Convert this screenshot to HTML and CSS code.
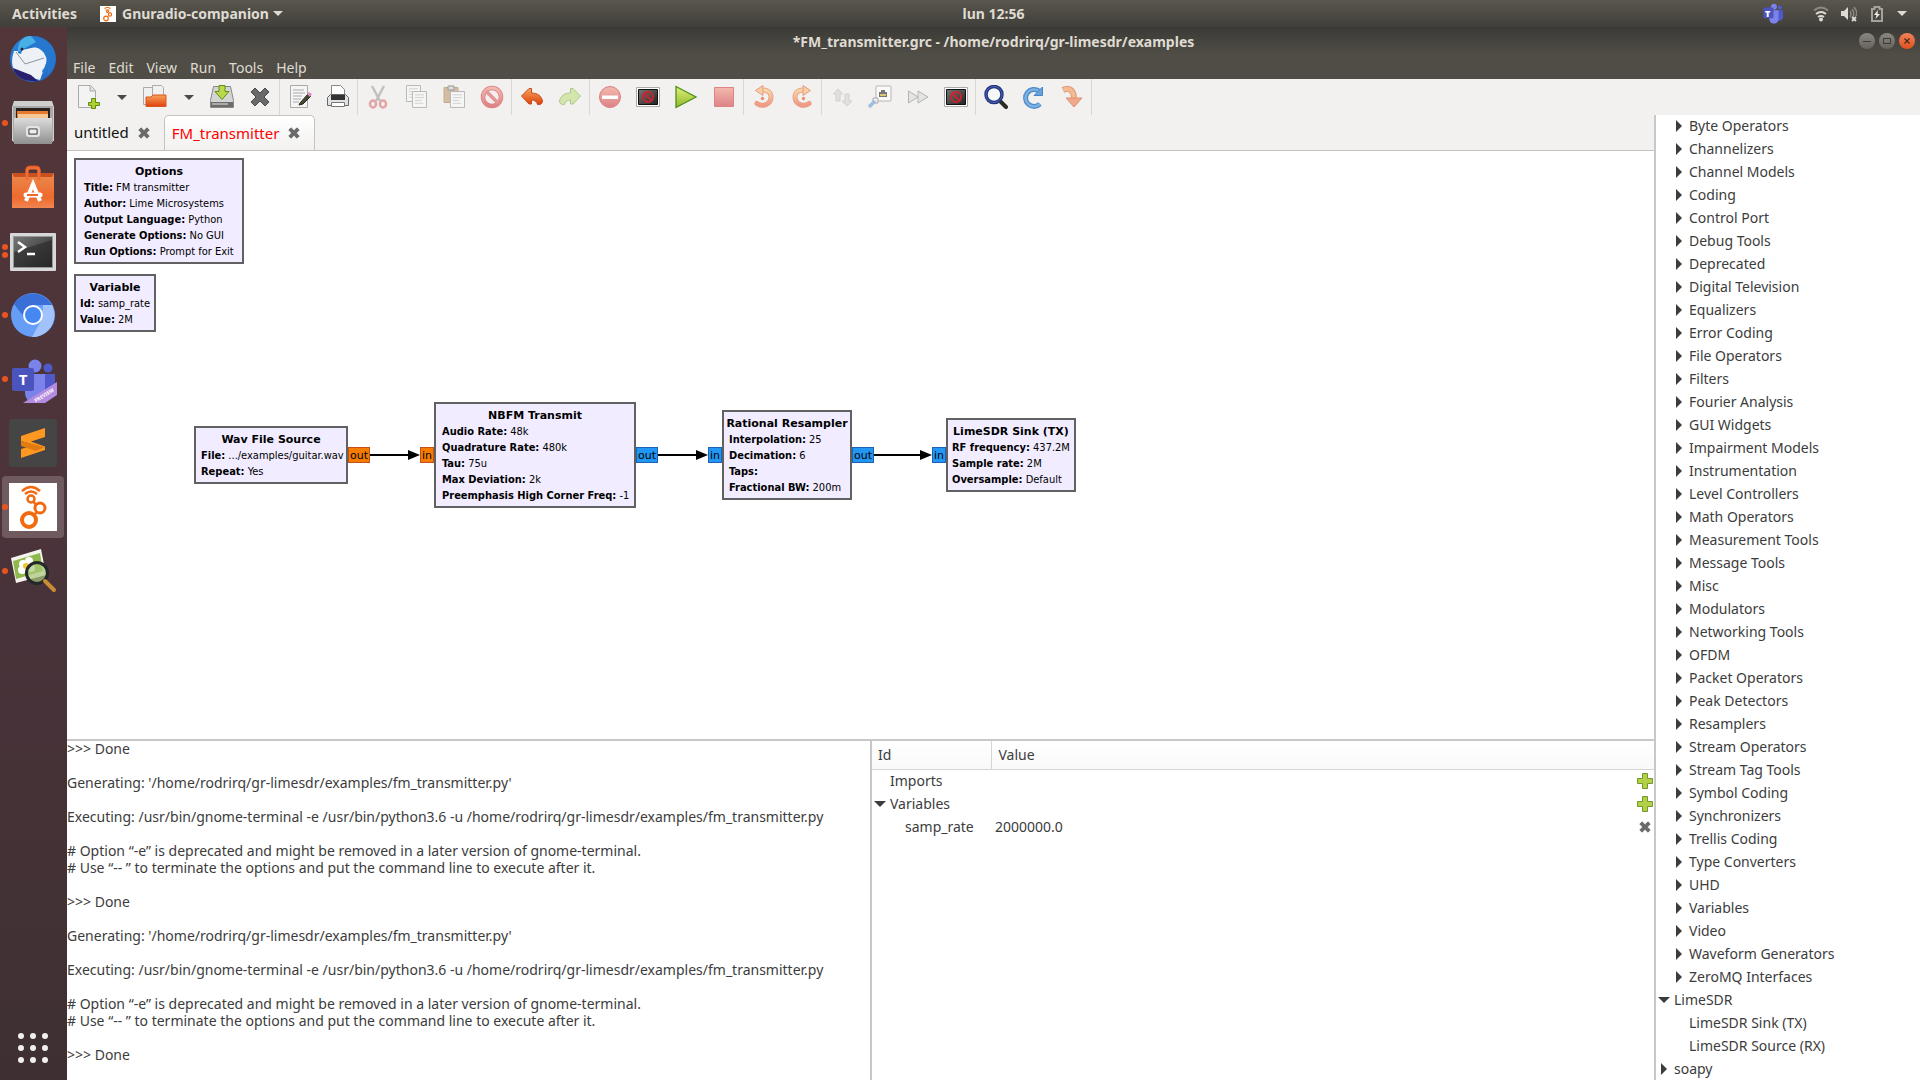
FILE: index.html
```html
<!DOCTYPE html>
<html lang="en">
<head>
<meta charset="utf-8">
<title>*FM_transmitter.grc - /home/rodrirq/gr-limesdr/examples</title>
<link rel="stylesheet" href="styles.css">
</head>
<body>
<svg class="defs" width="0" height="0" aria-hidden="true">
  <defs>
    <linearGradient id="g-steel" x1="0" y1="0" x2="0" y2="1"><stop offset="0" stop-color="#dcdcdc"/><stop offset="1" stop-color="#8f8f8f"/></linearGradient>
    <linearGradient id="g-red" x1="0" y1="0" x2="0" y2="1"><stop offset="0" stop-color="#f3b9ad"/><stop offset="1" stop-color="#de8287"/></linearGradient>
    <linearGradient id="g-green" x1="0" y1="0" x2="0" y2="1"><stop offset="0" stop-color="#dff07a"/><stop offset="1" stop-color="#8fb82a"/></linearGradient>
    <linearGradient id="g-orange" x1="0" y1="0" x2="0" y2="1"><stop offset="0" stop-color="#f7a35c"/><stop offset="1" stop-color="#e0400f"/></linearGradient>
    <linearGradient id="g-peach" x1="0" y1="0" x2="0" y2="1"><stop offset="0" stop-color="#f8d6a6"/><stop offset="1" stop-color="#f09a84"/></linearGradient>
    <linearGradient id="g-dark" x1="0" y1="0" x2="1" y2="1"><stop offset="0" stop-color="#777"/><stop offset="1" stop-color="#222"/></linearGradient>
    <linearGradient id="g-bag" x1="0" y1="0" x2="0" y2="1"><stop offset="0" stop-color="#e98a4e"/><stop offset=".7" stop-color="#ef6a2d"/><stop offset="1" stop-color="#f28552"/></linearGradient>
    <linearGradient id="g-bird" x1="0" y1="0" x2="1" y2="1"><stop offset="0" stop-color="#2f8fe0"/><stop offset=".5" stop-color="#1f5fc4"/><stop offset="1" stop-color="#2c74c8"/></linearGradient>
  </defs>
  <symbol id="i-cross" viewBox="0 0 24 24"><path d="M3 7l4-4 5 5 5-5 4 4-5 5 5 5-4 4-5-5-5 5-4-4 5-5z" fill="#6a6a6a" stroke="#4a4a4a" stroke-linejoin="round"/></symbol>
  <symbol id="i-plus" viewBox="0 0 16 16"><path d="M5.500.5h5v5h5v5h-5v5h-5v-5h-5v-5h5z" fill="#b5d047" stroke="#6f9a2a"/></symbol>
  <symbol id="i-page" viewBox="0 0 16 18"><path d="M.5.5h15v17H.500z" fill="#f6f6f6" stroke="#b4b4b2"/><path d="M3 4h10M3 7h10M3 10h7M3 13h9" stroke="#cfcfcd"/></symbol>
  <symbol id="i-screen" viewBox="0 0 24 24"><path d="M.5 2.500h23v19H.500z" fill="#fff" stroke="#aaa"/><path d="M2.500 4.500h19v15h-19z" fill="url(#g-dark)" stroke="#111"/><circle cx="12" cy="12" r="5" fill="none" stroke="#c8242f" stroke-width="2"/><path d="M8.500 8.500l7 7" stroke="#c8242f" stroke-width="2"/></symbol>
  <symbol id="i-rotate" viewBox="0 0 24 24"><path d="M5 18.500c5 3.500 14 1.500 14-6.500 0-5-4-7-8-7" fill="none" stroke="#e59b82" stroke-width="5" stroke-linecap="round"/><path d="M5 18.500c5 3.500 14 1.500 14-6.500 0-5-4-7-8-7" fill="none" stroke="url(#g-peach)" stroke-width="3.500" stroke-linecap="round"/><path d="M11 0.500v10L3.500 5.500z" fill="#f8cfa4" stroke="#e59b82"/><circle cx="10.500" cy="13.500" r="1.700" fill="#e88f70"/></symbol>
  <symbol id="i-undo" viewBox="0 0 24 24"><path d="M1.500 11L9 3.500h2.500v4.500c6 0 10 3 11 8 0 3-2.500 4-5 3.500-.5-3-3-4.500-6-4.500v4H9z" stroke-linejoin="round"/></symbol>
  <symbol id="i-teams" viewBox="0 0 48 48"><circle cx="26" cy="8" r="6.500" fill="#7b83eb"/><circle cx="39" cy="10" r="4.500" fill="#5059c9"/><path d="M31 16h15v14c0 6-4 9-9 9h-6z" fill="#5059c9"/><path d="M16 16h20v18c0 8-5 11-10 11s-10-3-10-11z" fill="#7b83eb"/><rect x="3" y="10" width="22" height="23" rx="2" fill="#4b53bc"/></symbol>
  <symbol id="i-down" viewBox="0 0 12 6"><path d="M0 0h12L6 6z" fill="currentColor"/></symbol>
  <symbol id="i-right" viewBox="0 0 6 12"><path d="M0 0v12l6-6z" fill="currentColor"/></symbol>
</svg>

<header class="panel">
  <nav class="panel-left">
    <button class="panel-btn">Activities</button>
    <button class="panel-btn app-menu">
      <svg class="app-icon" viewBox="0 0 16 16"><path d="M0 0h16v16H0z" fill="#fff"/><g fill="none" stroke="#f26a10" stroke-width="1.200"><path d="M4.500 2.500q3-2 6 0M5.500 4h4"/><circle cx="7.500" cy="5.500" r="1"/><circle cx="10" cy="8.500" r="1.600"/><circle cx="6" cy="12.500" r="2.300"/></g></svg>
      <span>Gnuradio-companion</span>
      <svg class="caret"><use href="#i-down"/></svg>
    </button>
  </nav>
  <time class="clock">lun 12:56</time>
  <div class="tray">
    <span class="tray-teams"><svg viewBox="0 0 48 48" width="24" height="22"><use href="#i-teams"/></svg><b>T</b></span>
    <svg width="16" height="16" viewBox="0 0 16 16" fill="none" stroke="#dfdbd2" stroke-width="2"><path d="M1 4.500q7-6 14 0" stroke="#8b887f"/><path d="M3 8q5-4 10 0"/><path d="M5 11q3-2 6 0"/><circle cx="8" cy="13.500" r="1" fill="#dfdbd2"/></svg>
    <svg width="16" height="16" viewBox="0 0 16 16"><path d="M0 5h3l4-4v13l-4-4H0z" fill="#dfdbd2"/><path d="M9 5q2 3 0 6M11 3q3 4 1 8M13 1q4 5 2 9" fill="none" stroke="#8b887f" stroke-width="1.500"/><path d="M11 11l4 4m0-4l-4 4" stroke="#dfdbd2" stroke-width="1.800"/></svg>
    <svg width="16" height="16" viewBox="-2 0 16 16"><path d="M1 3h2.500V1h5v2H11v12H1z" fill="none" stroke="#a5a29a" stroke-width="2"/><path d="M7 4L3 9h2.500L4.500 13 9 8H6.500z" fill="#efece5"/></svg>
    <svg class="caret"><use href="#i-down"/></svg>
  </div>
</header>

<div class="desktop">
  <nav class="dock">
    <button class="dock-item" aria-label="Mail"><svg viewBox="0 0 48 48"><circle cx="24" cy="24" r="23" fill="url(#g-bird)"/><path d="M5 16q-6 18 6 24l20 5 8-22-8-12-22 5z" fill="#eef2f6"/><path d="M7 17l9 12 19-6" fill="none" stroke="#8c96a2"/><path d="M4 33q2 8 12 12l14 2-8-7z" fill="#2a1f6e"/><path d="M9 18C7 6 14 1 21 1c11-1 23 6 25 17 2 10-2 18-8 23l1-7-4 6-2-4q8-9 2-18-5-7-14-6-8 0-9 7z" fill="#2577cf"/><path d="M9 17C8 7 14 1 22 1l5 6-9 5z" fill="#49b0e6"/><circle cx="13" cy="14" r="1.500" fill="#223"/></svg></button>
    <button class="dock-item running" aria-label="Files"><svg viewBox="0 0 48 48"><path d="M5 2h38l2 6v34H3V8z" fill="#cfcfcf"/><path d="M4 7h40v36H4z" fill="#a9a9a9"/><path d="M7 9h34v10H7z" fill="#2b2220"/><path d="M8 12h31v8H8z" fill="#e67a2e"/><path d="M9 15h30v5H9z" fill="#f6c795"/><path d="M5 19h38v26H5z" fill="url(#g-steel)"/><rect x="18" y="28" width="12" height="9" rx="2" fill="none" stroke="#e4e4e4" stroke-width="2"/><path d="M20 30h8v5h-8z" fill="#eee" stroke="#555"/></svg></button>
    <button class="dock-item" aria-label="Software"><svg viewBox="0 0 48 48"><path d="M18 14V7q0-3 3-3h6q3 0 3 3v7" fill="none" stroke="#d9501e" stroke-width="3"/><path d="M3 10h42v35H3z" fill="url(#g-bag)"/><path d="M3 10h42l-2 4H5z" fill="#c9501f"/><path d="M18 17V8q0-3 3-3h6q3 0 3 3v9" fill="none" stroke="#ef6c35" stroke-width="3"/><path d="M17 38l7-17 7 17" fill="none" stroke="#fff" stroke-width="4"/><path d="M17 32h14" stroke="#fff" stroke-width="5" stroke-linecap="round"/><path d="M18 32h11" stroke="#ef6a2d" stroke-width="2"/></svg></button>
    <button class="dock-item running twice" aria-label="Terminal"><svg viewBox="0 -1 48 48"><rect x="1" y="5" width="46" height="38" rx="1" fill="#d8d8d8"/><path d="M4 8h40v32H4z" fill="#999"/><path d="M5 9h38v30H5z" fill="url(#g-dark)"/><path d="M5 24L43 12v27H5z" fill="#2a2a2a" opacity=".6"/><path d="M9 14l7 5-7 5M18 26h8" fill="none" stroke="#fff" stroke-width="2.500"/></svg></button>
    <button class="dock-item running" aria-label="Chromium"><svg viewBox="0 0 48 48"><circle cx="24" cy="24" r="22" fill="#669df6"/><path d="M5 13A22 22 0 0 1 43 14H24l-9 12z" fill="#3b6fd8"/><path d="M43 14A22 22 0 0 1 23 46l10-18 1-14z" fill="#a1c2fa"/><circle cx="24" cy="24" r="10" fill="#fff"/><circle cx="24" cy="24" r="8" fill="#4688f1"/></svg></button>
    <button class="dock-item running" aria-label="Teams"><svg viewBox="0 0 48 48"><use href="#i-teams" y="3" width="48" height="48"/><path d="M14 48L48 27v13L36 48z" fill="#b48be0"/><text class="teams-t" x="14" y="30">T</text><text class="teams-preview" x="35" y="42" transform="rotate(-32 35 40)">PREVIEW</text></svg></button>
    <button class="dock-item" aria-label="Sublime Text"><svg viewBox="0 0 48 48"><rect width="48" height="48" rx="3" fill="#454545"/><path d="M12 17l24-8v9l-14 4.500 14 5V31l-24 8v-9l13-4-13-4z" fill="#ff9821"/><path d="M12 22l24 6-9 4-15-5z" fill="#e07c10"/></svg></button>
    <button class="dock-item running active" aria-label="GNU Radio Companion"><svg viewBox="0 0 48 48"><path d="M0 0h48v48H0z" fill="#fff"/><g fill="none" stroke="#f26a10" stroke-width="2.500"><path d="M13 8q9-8 18 0M16 11q6-5 12 0"/><circle cx="22" cy="16" r="3.500"/><circle cx="31" cy="25" r="5" stroke-width="3"/><circle cx="20" cy="37" r="7" stroke-width="4"/><path d="M24 18l3 4M28 29l-3 3"/></g></svg></button>
    <button class="dock-item running" aria-label="Image Viewer"><svg viewBox="0 0 48 48"><path d="M2 11l30-9 5 26-30 8z" fill="#f4f4ee"/><path d="M4 14l27-8 3 18-27 8z" fill="#8fb94c"/><g fill="#fff"><circle cx="14" cy="17" r="4"/><circle cx="20" cy="14" r="4"/><circle cx="13" cy="23" r="4"/><circle cx="22" cy="21" r="4"/></g><circle cx="17" cy="19" r="3" fill="#f1c62c"/><circle cx="28" cy="26" r="10.500" fill="#a9c77a" fill-opacity=".7" stroke="#23282a" stroke-width="3"/><path d="M36 34l9 9" stroke="#c98b33" stroke-width="4" stroke-linecap="round"/></svg></button>
    <button class="dock-item show-apps" aria-label="Show Applications"><svg viewBox="0 0 48 48" fill="#f2f0ee"><circle cx="12" cy="12" r="3"/><circle cx="24" cy="12" r="3"/><circle cx="36" cy="12" r="3"/><circle cx="12" cy="24" r="3"/><circle cx="24" cy="24" r="3"/><circle cx="36" cy="24" r="3"/><circle cx="12" cy="36" r="3"/><circle cx="24" cy="36" r="3"/><circle cx="36" cy="36" r="3"/></svg></button>
  </nav>

  <main class="window">
    <header class="titlebar">
      <h1 class="title">*FM_transmitter.grc - /home/rodrirq/gr-limesdr/examples</h1>
      <div class="win-buttons">
        <button aria-label="Minimize"><svg viewBox="0 0 16 16"><path d="M4 8.500h8" stroke="#3c3b37"/></svg></button>
        <button aria-label="Maximize"><svg viewBox="0 0 16 16"><path d="M4.500 5.500h7v5h-7z" fill="none" stroke="#3c3b37"/></svg></button>
        <button class="close" aria-label="Close"><svg viewBox="0 0 16 16"><path d="M5.500 5.500l5 5m0-5l-5 5" stroke="#4a2a1c" stroke-width="1.300"/></svg></button>
      </div>
    </header>
    <nav class="menubar">
      <button>File</button><button>Edit</button><button>View</button><button>Run</button><button>Tools</button><button>Help</button>
    </nav>
    <div class="toolbar" role="toolbar">
      <div class="group">
        <button aria-label="New"><svg viewBox="0 0 24 24"><path d="M2.500.5h12l5 5v17h-17z" fill="#f3f3f3" stroke="#aaa"/><path d="M14 1v5h5" fill="#ddd" stroke="#aaa"/><path d="M15.500 13.500h4v4h4v3h-4v3h-4v-3h-3v-3h3z" fill="#b0d030" stroke="#5f8a10"/></svg></button>
        <button class="drop" aria-label="New menu"><svg><use href="#i-down"/></svg></button>
        <button aria-label="Open"><svg viewBox="0 0 24 24"><path d="M.5 2.500h9v17h-9zM9.500.5h9l2 2v12h-11z" fill="#f0f0f0" stroke="#aaa"/><path d="M3 21.500V12h5l2-2h13v11.500z" fill="url(#g-orange)" stroke="#d9541e"/></svg></button>
        <button class="drop" aria-label="Open menu"><svg><use href="#i-down"/></svg></button>
        <button aria-label="Save"><svg viewBox="0 0 24 24"><path d="M3.500 1.500h17l3 14v7H.500v-7z" fill="#d4d4d4" stroke="#888"/><path d="M1 17h22v5H1z" fill="#6c6c6c"/><path d="M2 18h16v2H2z" fill="#aaa"/><path d="M9 .5h6v6h4l-7 8-7-8h4z" fill="#b8d94a" stroke="#5f8f14"/></svg></button>
        <button aria-label="Close"><svg viewBox="0 0 24 24"><use href="#i-cross"/></svg></button>
      </div>
      <div class="group">
        <button aria-label="Screen capture"><svg viewBox="0 0 24 24"><path d="M2.500.5h17v22h-17z" fill="#f5f5f5" stroke="#aaa"/><path d="M5 5h11M5 8h12M5 11h9M5 14h8M5 17h6" stroke="#aaa"/><path d="M12 18L20 9l3 2-8 8-4 1z" fill="#4a4a30" stroke="#222"/><path d="M19 9l2-2 3 2-2 3z" fill="#dd8fc5"/></svg></button>
        <button aria-label="Print"><svg viewBox="0 0 24 24"><path d="M5.500.5h9l4 4v9h-13z" fill="#fff" stroke="#888"/><path d="M1.500 12.500l3-3h15l3 3v8h-21z" fill="#e2e2e2" stroke="#666"/><path d="M5 10h14v5H5z" fill="#333"/><path d="M5.500 17.500h13v4h-13z" fill="#fff" stroke="#777"/></svg></button>
      </div>
      <div class="group">
        <button aria-label="Cut"><svg viewBox="0 0 24 24" fill="none"><path d="M6 1l8 15M18 1l-8 15" stroke="#c0c0be" stroke-width="2.500"/><ellipse cx="7" cy="19" rx="3" ry="3.500" stroke="#e3a5a5" stroke-width="2.500"/><ellipse cx="17" cy="19" rx="3" ry="3.500" stroke="#e3a5a5" stroke-width="2.500"/></svg></button>
        <button aria-label="Copy"><svg viewBox="0 0 24 24"><use href="#i-page" x="2" y="0" width="15" height="17"/><use href="#i-page" x="8" y="6" width="15" height="17"/></svg></button>
        <button aria-label="Paste"><svg viewBox="0 0 24 24"><path d="M2 2.500h14v15H2z" fill="#d2bda2" stroke="#c4ac8e"/><path d="M6 1h6v4H6z" fill="#ddd" stroke="#999"/><use href="#i-page" x="8" y="6" width="15" height="17"/></svg></button>
        <button aria-label="Delete"><svg viewBox="0 0 24 24"><circle cx="12" cy="12" r="9" fill="#f4eeee" stroke="#d98082" stroke-width="4.500"/><circle cx="12" cy="12" r="9" fill="none" stroke="url(#g-red)" stroke-width="3"/><path d="M6 6l12 12" stroke="#e39794" stroke-width="3.500"/></svg></button>
      </div>
      <div class="group">
        <button aria-label="Undo"><svg viewBox="0 0 24 24" fill="url(#g-orange)" stroke="#c3501c"><use href="#i-undo"/></svg></button>
        <button aria-label="Redo"><svg class="flip" viewBox="0 0 24 24" fill="#d3e6ae" stroke="#adc98a"><use href="#i-undo"/></svg></button>
      </div>
      <div class="group">
        <button aria-label="Errors"><svg viewBox="0 0 24 24"><circle cx="12" cy="12" r="10.500" fill="url(#g-red)" stroke="#d98082"/><path d="M4 10.500h16v3.500H4z" fill="#fff"/></svg></button>
        <button aria-label="Generate"><svg viewBox="0 0 24 24"><use href="#i-screen"/></svg></button>
        <button aria-label="Execute"><svg viewBox="0 0 24 24"><path d="M2 1.500v21L22 12z" fill="url(#g-green)" stroke="#4e8f1a" stroke-width="1.300"/></svg></button>
        <button aria-label="Kill"><svg viewBox="0 0 24 24"><path d="M2.500 2.500h19v19h-19z" fill="url(#g-red)" stroke="#dc8585"/></svg></button>
      </div>
      <div class="group">
        <button aria-label="Rotate left"><svg viewBox="0 0 24 24"><use href="#i-rotate"/></svg></button>
        <button aria-label="Rotate right"><svg class="flip" viewBox="0 0 24 24"><use href="#i-rotate"/></svg></button>
      </div>
      <div class="group">
        <button aria-label="Enable"><svg viewBox="0 0 24 24" fill="#e0e0dc" stroke="#d0d0cc"><path d="M3.500 9L8 4l4.500 5H10v7H6V9zM15 9h4v7h3l-5 5-5-5h3z"/></svg></button>
        <button aria-label="Disable"><svg viewBox="0 0 24 24"><rect x="8" y="1" width="15" height="15" rx="1" fill="#fafafa" stroke="#b5b5b3"/><path d="M11 12V7h2V5h4v2h2v5z" fill="#777"/><path d="M12 9h6v2h-6z" fill="#d8c872"/><path d="M5 13h5v5H5z" fill="#eee" stroke="#aaa"/><path d="M1 22l6-6" stroke="#9fbede" stroke-width="3.500"/></svg></button>
        <button aria-label="Bypass"><svg viewBox="0 0 24 24" fill="#e4e4e2" stroke="#b4b4b2"><path d="M2.500 6v12L12 12zM12 6v12l10-6z"/></svg></button>
        <button aria-label="Toggle"><svg viewBox="0 0 24 24"><use href="#i-screen"/></svg></button>
      </div>
      <div class="group">
        <button aria-label="Find"><svg viewBox="0 0 24 24"><path d="M15 15l7 7" stroke="#2c2c22" stroke-width="4" stroke-linecap="round"/><circle cx="10" cy="9.500" r="8" fill="#f6f8fb" stroke="#24357d" stroke-width="3.500"/><circle cx="10" cy="9.500" r="8" fill="none" stroke="#4a66b8"/></svg></button>
        <button aria-label="Reload"><svg viewBox="0 0 24 24" fill="none"><path d="M18 19A8.500 8.500 0 1 1 17 6" stroke="#4d8ccb" stroke-width="5"/><path d="M18 19A8.500 8.500 0 1 1 17 6" stroke="#7db0e0" stroke-width="2.500"/><path d="M20.500 2v8.500h-8.500z" fill="#6aa3dc" stroke="#4584c4"/></svg></button>
        <button aria-label="Open hierarchy"><svg viewBox="0 0 24 24"><path d="M3 5c6-3 11 0 11 9" fill="none" stroke="#e39a76" stroke-width="6"/><path d="M3.500 5c5-3 10.500 0 10.500 10" fill="none" stroke="#f3ba93" stroke-width="4"/><path d="M6 13h16l-8 9z" fill="#f0a98a" stroke="#e08f74"/></svg></button>
      </div>
      <div class="group"></div>
    </div>

    <div class="workspace">
      <div class="left">
        <div class="tabs" role="tablist">
          <div class="tab"><button class="tab-label" role="tab">untitled</button><button class="tab-close" aria-label="Close untitled"><svg><use href="#i-cross"/></svg></button></div>
          <div class="tab selected"><button class="tab-label" role="tab" aria-selected="true">FM_transmitter</button><button class="tab-close" aria-label="Close FM_transmitter"><svg><use href="#i-cross"/></svg></button></div>
        </div>
        <section class="canvas">
          <svg class="wires" width="1100" height="400" fill="#000"><path d="M303 303h38v-4l12 5-12 5v-4h-38zM591 303h38v-4l12 5-12 5v-4h-38zM807 303h46v-4l12 5-12 5v-4h-46z"/></svg>
          <article class="block options"><h2>Options</h2><p><b>Title:</b> FM transmitter</p><p><b>Author:</b> Lime Microsystems</p><p><b>Output Language:</b> Python</p><p><b>Generate Options:</b> No GUI</p><p><b>Run Options:</b> Prompt for Exit</p></article>
          <article class="block variable"><h2>Variable</h2><p><b>Id:</b> samp_rate</p><p><b>Value:</b> 2M</p></article>
          <article class="block wav"><h2>Wav File Source</h2><p><b>File:</b> .../examples/guitar.wav</p><p><b>Repeat:</b> Yes</p><span class="port out int">out</span></article>
          <article class="block nbfm"><h2>NBFM Transmit</h2><p><b>Audio Rate:</b> 48k</p><p><b>Quadrature Rate:</b> 480k</p><p><b>Tau:</b> 75u</p><p><b>Max Deviation:</b> 2k</p><p><b>Preemphasis High Corner Freq:</b> -1</p><span class="port in int">in</span><span class="port out">out</span></article>
          <article class="block resampler"><h2>Rational Resampler</h2><p><b>Interpolation:</b> 25</p><p><b>Decimation:</b> 6</p><p><b>Taps:</b></p><p><b>Fractional BW:</b> 200m</p><span class="port in">in</span><span class="port out">out</span></article>
          <article class="block sink"><h2>LimeSDR Sink (TX)</h2><p><b>RF frequency:</b> 437.2M</p><p><b>Sample rate:</b> 2M</p><p><b>Oversample:</b> Default</p><span class="port in">in</span></article>
        </section>
        <div class="bottom">
          <pre class="console">&gt;&gt;&gt; Done

Generating: '/home/rodrirq/gr-limesdr/examples/fm_transmitter.py'

Executing: /usr/bin/gnome-terminal -e /usr/bin/python3.6 -u /home/rodrirq/gr-limesdr/examples/fm_transmitter.py

# Option “-e” is deprecated and might be removed in a later version of gnome-terminal.
# Use “-- ” to terminate the options and put the command line to execute after it.

&gt;&gt;&gt; Done

Generating: '/home/rodrirq/gr-limesdr/examples/fm_transmitter.py'

Executing: /usr/bin/gnome-terminal -e /usr/bin/python3.6 -u /home/rodrirq/gr-limesdr/examples/fm_transmitter.py

# Option “-e” is deprecated and might be removed in a later version of gnome-terminal.
# Use “-- ” to terminate the options and put the command line to execute after it.

&gt;&gt;&gt; Done</pre>
          <div class="variables">
            <table>
              <thead><tr><th class="col-id">Id</th><th colspan="2">Value</th></tr></thead>
              <tbody>
                <tr><td class="lvl1">Imports</td><td></td><td class="act"><button aria-label="Add import"><svg class="plus"><use href="#i-plus"/></svg></button></td></tr>
                <tr><td class="lvl0"><svg class="open"><use href="#i-down"/></svg>Variables</td><td></td><td class="act"><button aria-label="Add variable"><svg class="plus"><use href="#i-plus"/></svg></button></td></tr>
                <tr><td class="lvl2">samp_rate</td><td>2000000.0</td><td class="act"><button aria-label="Remove samp_rate"><svg class="remove"><use href="#i-cross"/></svg></button></td></tr>
              </tbody>
            </table>
          </div>
        </div>
      </div>
      <aside class="library">
        <ul class="sub">
          <li><svg><use href="#i-right"/></svg>Byte Operators</li>
          <li><svg><use href="#i-right"/></svg>Channelizers</li>
          <li><svg><use href="#i-right"/></svg>Channel Models</li>
          <li><svg><use href="#i-right"/></svg>Coding</li>
          <li><svg><use href="#i-right"/></svg>Control Port</li>
          <li><svg><use href="#i-right"/></svg>Debug Tools</li>
          <li><svg><use href="#i-right"/></svg>Deprecated</li>
          <li><svg><use href="#i-right"/></svg>Digital Television</li>
          <li><svg><use href="#i-right"/></svg>Equalizers</li>
          <li><svg><use href="#i-right"/></svg>Error Coding</li>
          <li><svg><use href="#i-right"/></svg>File Operators</li>
          <li><svg><use href="#i-right"/></svg>Filters</li>
          <li><svg><use href="#i-right"/></svg>Fourier Analysis</li>
          <li><svg><use href="#i-right"/></svg>GUI Widgets</li>
          <li><svg><use href="#i-right"/></svg>Impairment Models</li>
          <li><svg><use href="#i-right"/></svg>Instrumentation</li>
          <li><svg><use href="#i-right"/></svg>Level Controllers</li>
          <li><svg><use href="#i-right"/></svg>Math Operators</li>
          <li><svg><use href="#i-right"/></svg>Measurement Tools</li>
          <li><svg><use href="#i-right"/></svg>Message Tools</li>
          <li><svg><use href="#i-right"/></svg>Misc</li>
          <li><svg><use href="#i-right"/></svg>Modulators</li>
          <li><svg><use href="#i-right"/></svg>Networking Tools</li>
          <li><svg><use href="#i-right"/></svg>OFDM</li>
          <li><svg><use href="#i-right"/></svg>Packet Operators</li>
          <li><svg><use href="#i-right"/></svg>Peak Detectors</li>
          <li><svg><use href="#i-right"/></svg>Resamplers</li>
          <li><svg><use href="#i-right"/></svg>Stream Operators</li>
          <li><svg><use href="#i-right"/></svg>Stream Tag Tools</li>
          <li><svg><use href="#i-right"/></svg>Symbol Coding</li>
          <li><svg><use href="#i-right"/></svg>Synchronizers</li>
          <li><svg><use href="#i-right"/></svg>Trellis Coding</li>
          <li><svg><use href="#i-right"/></svg>Type Converters</li>
          <li><svg><use href="#i-right"/></svg>UHD</li>
          <li><svg><use href="#i-right"/></svg>Variables</li>
          <li><svg><use href="#i-right"/></svg>Video</li>
          <li><svg><use href="#i-right"/></svg>Waveform Generators</li>
          <li><svg><use href="#i-right"/></svg>ZeroMQ Interfaces</li>
        </ul>
        <ul><li><svg class="open"><use href="#i-down"/></svg>LimeSDR</li></ul>
        <ul class="sub leaves"><li>LimeSDR Sink (TX)</li><li>LimeSDR Source (RX)</li></ul>
        <ul><li><svg><use href="#i-right"/></svg>soapy</li></ul>
      </aside>
    </div>
  </main>
</div>
</body>
</html>
```
FILE: styles.css
```css
* { box-sizing: border-box; }

body {
  margin: 0;
  height: 100vh;
  display: flex;
  flex-direction: column;
  overflow: hidden;
  font: 14px/17px "Noto Sans", "Open Sans", sans-serif;
  color: #3c3c3c;
  background: #3e2f31;
}

.defs { position: absolute; }

svg { display: block; flex: none; }

button {
  margin: 0;
  padding: 0;
  border: 0;
  background: none;
  color: inherit;
  font: inherit;
}

h1, h2, p, ul, pre { margin: 0; padding: 0; list-style: none; font: inherit; }

/* Top panel */
.panel {
  flex: none;
  height: 27px;
  display: grid;
  grid-template-columns: 67px 1fr;
  align-items: center;
  color: #dfdbd2;
  font-weight: bold;
  background: linear-gradient(#5a564d, #403f3a);
}

.panel-left { grid-area: 1 / 1 / 2 / 3; display: flex; gap: 23px; padding-left: 12px; }
.panel-btn { display: flex; align-items: center; }
.app-icon { width: 16px; height: 16px; margin-right: 6px; }
.caret { width: 10px; height: 5px; }
.app-menu .caret { margin-left: 4px; }
.clock { grid-area: 1 / 2; justify-self: center; }
.tray { grid-area: 1 / 2; justify-self: end; display: flex; align-items: center; gap: 12px; padding-right: 13px; }
.tray-teams { display: flex; position: relative; margin-right: 16px; }
.tray-teams b { position: absolute; left: 4px; top: 2px; font-size: 9px; color: #fff; }

/* Dock and window share the rest of the screen */
.desktop { flex: 1; min-height: 0; display: flex; }

.dock {
  flex: none;
  width: 67px;
  display: flex;
  flex-direction: column;
  gap: 2px;
  padding: 1px 3px 1px 2px;
  background: linear-gradient(#523639, #49333a 55%, #3e3032);
}

.dock-item {
  position: relative;
  flex: none;
  height: 62px;
  display: flex;
  align-items: center;
  justify-content: center;
  border-radius: 4px;
}
.dock-item svg { width: 48px; height: 48px; }
.dock-item.active { background: #6f5a5f; }
.dock-item.running::before {
  content: "";
  position: absolute;
  left: 0;
  top: 28px;
  width: 6px;
  height: 6px;
  border-radius: 3px;
  background: #e95420;
}
.dock-item.twice::before { top: 24px; box-shadow: 0 8px #e95420; }
.show-apps { margin-top: auto; }
.teams-t { font-size: 15px; font-weight: bold; text-anchor: middle; fill: #fff; }
.teams-preview { font-size: 5px; font-weight: bold; text-anchor: middle; fill: #fff; }

.window { flex: 1; min-width: 0; display: flex; flex-direction: column; background: #f2f1f0; }

.titlebar {
  flex: none;
  height: 28px;
  display: grid;
  grid-template-columns: 1fr;
  align-items: center;
  color: #dfdbd2;
  background: linear-gradient(#3b3a36, #504d46);
}
.title { grid-area: 1 / 1; justify-self: center; font-weight: bold; }
.win-buttons { grid-area: 1 / 1; justify-self: end; display: flex; gap: 4px; padding-right: 5px; }
.win-buttons button { width: 16px; height: 16px; border-radius: 8px; background: linear-gradient(#8a8780, #65635c); }
.win-buttons .close { background: linear-gradient(#f0825a, #e2501e); }

.menubar { flex: none; height: 24px; display: flex; align-items: center; gap: 1px; color: #dfdbd2; background: #504d46; }
.menubar button { padding: 0 6px; }

.toolbar { flex: none; height: 36px; display: flex; padding-left: 2px; }
.group { display: flex; }
.group + .group { border-left: 1px solid #d9d7d5; padding-left: 1px; }
.toolbar button { width: 38px; display: flex; align-items: center; justify-content: center; color: #4a4a4a; }
.toolbar button svg { width: 24px; height: 24px; }
.toolbar .drop { width: 29px; }
.toolbar .drop svg { width: 10px; height: 5px; }
.flip { transform: scaleX(-1); }

.workspace { flex: 1; min-height: 0; display: flex; }
.left { flex: 1; min-width: 0; display: flex; flex-direction: column; }

.tabs { flex: none; height: 36px; display: flex; border-bottom: 1px solid #c8c2be; font-size: 15px; }
.tab { display: flex; align-items: center; gap: 8px; padding: 0 13px 0 7px; color: #111; }
.tab.selected {
  border: 1px solid #c8c2be;
  border-bottom: 0;
  border-radius: 5px 5px 0 0;
  color: #f00;
  background: linear-gradient(#fff, #f2f1f0);
}
.tab-close svg { width: 14px; height: 14px; }

/* Flow graph canvas */
.canvas { flex: 1; min-height: 0; position: relative; overflow: hidden; background: #fff; }
.wires { position: absolute; left: 0; top: 0; }

.block {
  position: absolute;
  padding: 4px 4px 2px;
  border: 2px solid #616161;
  background: #f1ecff;
  color: #000;
  font: 11px/16px "DejaVu Sans Condensed", "DejaVu Sans", sans-serif;
  white-space: nowrap;
}
.block h2 { margin: 0 -4px; font: bold 11px/16px "DejaVu Sans", sans-serif; text-align: center; }
.options { left: 7px; top: 7px; width: 170px; padding-left: 8px; padding-right: 8px; }
.variable { left: 7px; top: 123px; width: 82px; }
.wav { left: 127px; top: 275px; width: 154px; padding-left: 5px; padding-right: 5px; }
.nbfm { left: 367px; top: 251px; width: 202px; padding-left: 6px; padding-right: 6px; }
.resampler { left: 655px; top: 259px; width: 130px; padding-left: 5px; padding-right: 5px; }
.sink { left: 879px; top: 267px; width: 130px; }

.port {
  position: absolute;
  top: calc(50% - 8px);
  height: 16px;
  border: 1px solid #1d62b5;
  background: #2196f3;
  text-align: center;
  font: 11px/16px "DejaVu Sans", sans-serif;
}
.port.int { border-color: #c4511a; background: #f57c00; }
.port.out { left: 100%; width: 22px; margin-left: 2px; }
.port.in { right: 100%; width: 14px; margin-right: 2px; }

/* Console and variable editor */
.bottom { flex: none; display: flex; border-top: 2px solid #c8c8c8; background: #fff; }
.console { flex: 804 1 0; min-width: 0; margin-top: -1px; padding-bottom: 17px; overflow: hidden; }
.variables { flex: 783 1 0; min-width: 0; border-left: 2px solid #c8c8c8; }

table { width: 100%; border-collapse: collapse; table-layout: fixed; }
th { height: 28px; padding: 0 6px; text-align: left; font-weight: normal; border-bottom: 1px solid #d8d4d1; background: linear-gradient(#fff, #f9f9f9); }
th + th { border-left: 1px solid #d8d4d1; }
.col-id { width: 120px; }
td { height: 23px; padding: 0 3px; }
td.lvl1 { padding-left: 18px; }
td.lvl0 { padding-left: 2px; }
td.lvl2 { padding-left: 33px; }
.open { width: 12px; height: 6px; }
td .open { display: inline-block; margin-right: 4px; vertical-align: 2px; }
td.act { padding: 0 1px 0 0; }
.act button { display: flex; width: 16px; margin-left: auto; justify-content: center; }
.plus { width: 16px; height: 16px; }
.remove { width: 14px; height: 14px; }

/* Block library tree */
.library { flex: none; width: 266px; border-left: 2px solid #c8c8c8; background: #fff; overflow: hidden; }
.library li { height: 23px; display: flex; align-items: center; padding: 0 0 2px 5px; }
.library li svg { width: 6px; height: 12px; margin-right: 7px; }
.library li .open { width: 12px; height: 6px; margin: 0 4px 0 -3px; }
.library .sub li { padding-left: 20px; }
.library .leaves li { padding-left: 33px; }
```
